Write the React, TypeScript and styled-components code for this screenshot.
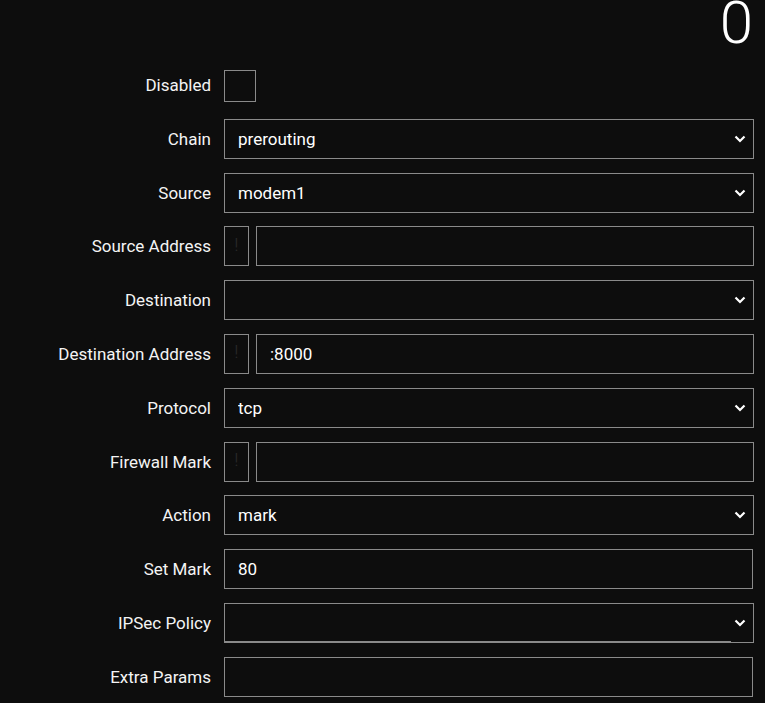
import { FC } from 'react'
import styled, { createGlobalStyle } from 'styled-components'

const GlobalStyle = createGlobalStyle`
  html, body {
    margin: 0;
    padding: 0;
    background-color: #0d0d0d;
    color: #fff;
    font-family: Roboto, 'Liberation Sans', sans-serif;
  }
`

const chevron =
  "url(\"data:image/svg+xml;utf8,<svg xmlns='http://www.w3.org/2000/svg' width='12' height='8' viewBox='0 0 12 8'><path d='M1.5 1.5 L6 6 L10.5 1.5' fill='none' stroke='white' stroke-width='2.2'/></svg>\")"

type Field =
  | { kind: 'check'; label: string }
  | { kind: 'select'; label: string; value: string; busy?: boolean }
  | { kind: 'address'; label: string; value: string }
  | { kind: 'text'; label: string; value: string }

const fields: Field[] = [
  { kind: 'check', label: 'Disabled' },
  { kind: 'select', label: 'Chain', value: 'prerouting' },
  { kind: 'select', label: 'Source', value: 'modem1' },
  { kind: 'address', label: 'Source Address', value: '' },
  { kind: 'select', label: 'Destination', value: '' },
  { kind: 'address', label: 'Destination Address', value: ':8000' },
  { kind: 'select', label: 'Protocol', value: 'tcp' },
  { kind: 'address', label: 'Firewall Mark', value: '' },
  { kind: 'select', label: 'Action', value: 'mark' },
  { kind: 'text', label: 'Set Mark', value: '80' },
  { kind: 'select', label: 'IPSec Policy', value: '', busy: true },
  { kind: 'text', label: 'Extra Params', value: '' },
]

const renderControl = (f: Field) => {
  switch (f.kind) {
    case 'check':
      return <CheckBox />
    case 'select':
      return (
        <SelectWrap>
          <Select defaultValue={f.value}>
            <option value={f.value}>{f.value}</option>
          </Select>
          {f.busy && <BusyLine />}
        </SelectWrap>
      )
    case 'address':
      return (
        <AddressGroup>
          <NegateBox>!</NegateBox>
          <TextInput defaultValue={f.value} />
        </AddressGroup>
      )
    default:
      return <TextInput defaultValue={f.value} narrow />
  }
}

const App: FC = () => {
  return (
    <Page>
      <GlobalStyle />
      <Header>
        <Counter>0</Counter>
      </Header>
      <Form>
        {fields.map((f) => (
          <Row key={f.label}>
            <Label>{f.label}</Label>
            {renderControl(f)}
          </Row>
        ))}
      </Form>
    </Page>
  )
}

export default App

const Page = styled.div`
  width: 765px;
  height: 703px;
  overflow: hidden;
`

const Header = styled.div`
  height: 52px;
  display: flex;
  justify-content: flex-end;
  align-items: flex-start;
  padding-right: 12px;
`

const Counter = styled.div`
  font-size: 60px;
  font-weight: 300;
  line-height: 1;
  margin-top: -7px;
  color: #fff;
`

const Form = styled.div`
  display: flex;
  flex-direction: column;
  gap: 13.8px;
  padding: 13px 11px 0 0;
`

const Row = styled.div`
  display: grid;
  grid-template-columns: 211px 1fr;
  column-gap: 13px;
  align-items: center;
  height: 40px;
`

const Label = styled.div`
  text-align: right;
  font-size: 17px;
  color: #f4f4f4;
  white-space: nowrap;
`

const controlBase = `
  box-sizing: border-box;
  height: 40px;
  margin: 0;
  background-color: #0d0d0d;
  border: 1px solid #8a8a8a;
  border-radius: 0;
  color: #fff;
  font-family: Roboto, 'Liberation Sans', sans-serif;
  font-size: 17px;
  outline: none;
`

const CheckBox = styled.div`
  box-sizing: border-box;
  width: 32px;
  height: 32px;
  margin-top: 2px;
  border: 1px solid #8a8a8a;
`

const SelectWrap = styled.div`
  position: relative;
  height: 40px;
`

const Select = styled.select`
  ${controlBase}
  width: 100%;
  padding: 0 30px 0 13px;
  appearance: none;
  -webkit-appearance: none;
  background-image: ${chevron};
  background-repeat: no-repeat;
  background-position: right 7px center;
`

const BusyLine = styled.div`
  position: absolute;
  left: 0;
  bottom: 0;
  width: 507px;
  height: 2px;
  background-color: #8a8a8a;
`

const AddressGroup = styled.div`
  display: flex;
  gap: 7px;
`

const NegateBox = styled.div`
  box-sizing: border-box;
  flex: 0 0 25px;
  height: 40px;
  padding-bottom: 4px;
  border: 1px solid #8a8a8a;
  display: flex;
  align-items: center;
  justify-content: center;
  color: #2a2a2a;
  font-size: 19px;
  font-weight: 300;
`

const TextInput = styled.input<{ narrow?: boolean }>`
  ${controlBase}
  flex: 1;
  min-width: 0;
  width: ${(p) => (p.narrow ? 'calc(100% - 1px)' : '100%')};
  padding: 0 13px;
`
